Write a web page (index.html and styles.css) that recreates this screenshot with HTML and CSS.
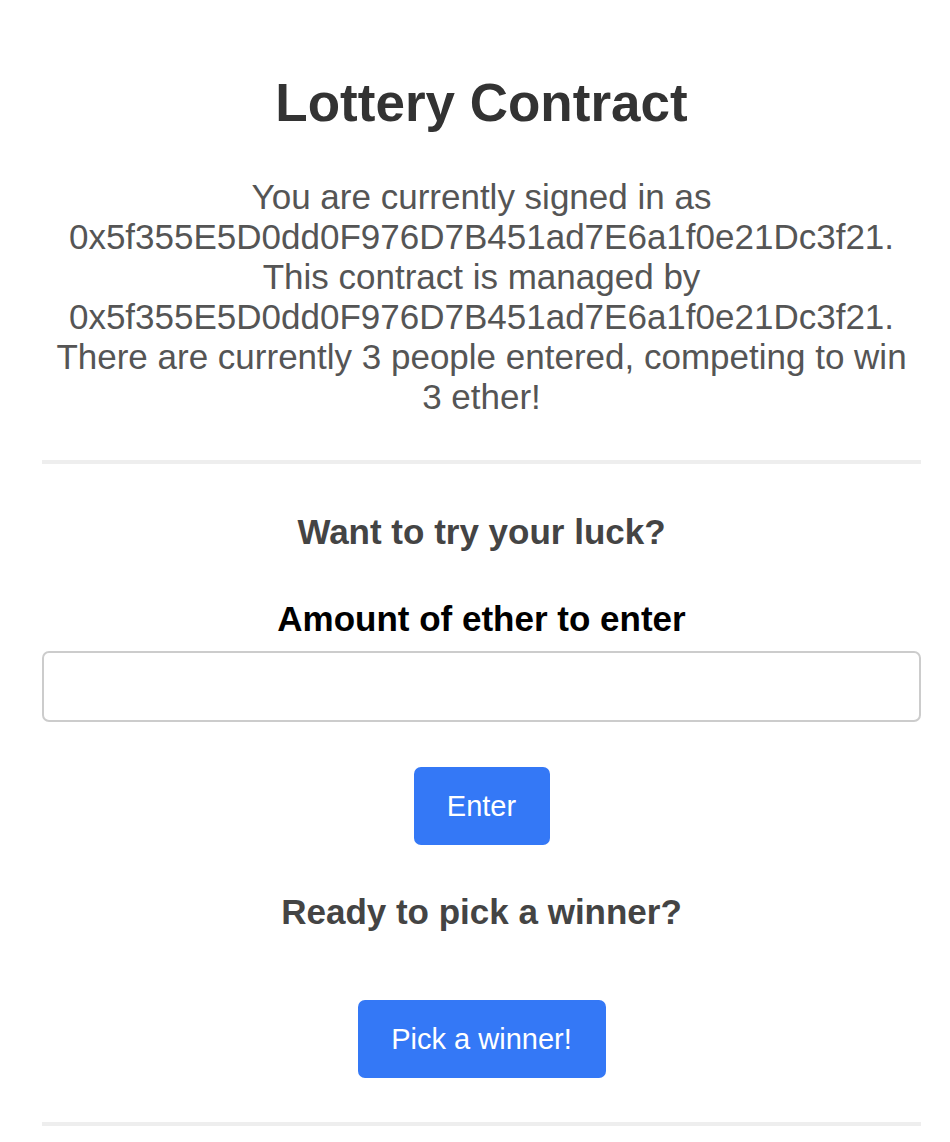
FILE: index.html
```html
<!DOCTYPE html>
<html>
<head>
<meta charset="utf-8">
<link rel="stylesheet" href="styles.css">
</head>
<body>
<main class="page">
  <h1 class="title">Lottery Contract</h1>
  <p class="intro">You are currently signed in as 0x5f355E5D0dd0F976D7B451ad7E6a1f0e21Dc3f21. This contract is managed by 0x5f355E5D0dd0F976D7B451ad7E6a1f0e21Dc3f21. There are currently 3 people entered, competing to win 3 ether!</p>
  <hr class="rule rule-top">
  <form class="entry">
    <h4 class="subhead">Want to try your luck?</h4>
    <label class="label" for="amount">Amount of ether to enter</label>
    <input class="field" id="amount" type="text">
    <button class="btn btn-enter" type="button">Enter</button>
  </form>
  <h4 class="subhead subhead-pick">Ready to pick a winner?</h4>
  <button class="btn btn-pick" type="button">Pick a winner!</button>
  <hr class="rule rule-bottom">
</main>
</body>
</html>
```
FILE: styles.css
```css
html, body {
  margin: 0;
  padding: 0;
  background: #ffffff;
}
body {
  font-family: "Liberation Sans", Arial, Helvetica, sans-serif;
}
.page {
  display: flex;
  flex-direction: column;
  align-items: center;
  margin: 0 29px 0 42px;
  text-align: center;
}
.title {
  margin: 73px 0 0;
  font-size: 53px;
  line-height: 60px;
  font-weight: bold;
  color: #333333;
}
.intro {
  margin: 44px 0 0;
  font-size: 35px;
  line-height: 40px;
  color: #555555;
}
.rule {
  align-self: stretch;
  border: 0;
  height: 4px;
  background: #eeeeee;
  margin: 0;
}
.rule-top {
  margin-top: 43px;
}
.entry {
  align-self: stretch;
  display: flex;
  flex-direction: column;
  align-items: center;
  margin: 0;
}
.subhead {
  margin: 48px 0 0;
  font-size: 35px;
  line-height: 40px;
  font-weight: bold;
  color: #444444;
}
.label {
  margin-top: 47px;
  font-size: 35px;
  line-height: 40px;
  font-weight: bold;
  color: #000000;
}
.field {
  align-self: stretch;
  box-sizing: border-box;
  margin-top: 12px;
  height: 71px;
  border: 2px solid #cccccc;
  border-radius: 7px;
  background: #ffffff;
  font-family: inherit;
  font-size: 30px;
  padding: 0 16px;
  outline: none;
}
.btn {
  box-sizing: border-box;
  height: 78px;
  border: 0;
  border-radius: 7px;
  background: #3478f6;
  color: #ffffff;
  font-family: "Liberation Sans", Arial, Helvetica, sans-serif;
  font-size: 29px;
  padding: 0 33px;
  cursor: pointer;
}
.btn-enter {
  margin-top: 45px;
  width: 136px;
}
.subhead-pick {
  margin-top: 47px;
}
.btn-pick {
  margin-top: 68px;
  width: 248px;
}
.rule-bottom {
  margin-top: 44px;
}
```
